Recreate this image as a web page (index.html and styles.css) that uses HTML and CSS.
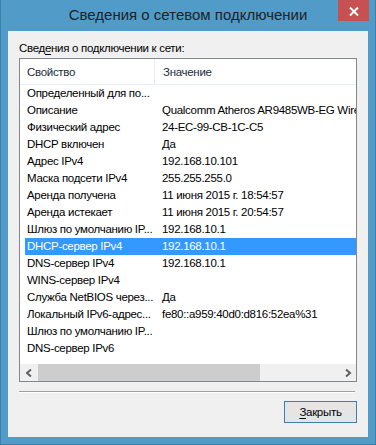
FILE: index.html
```html
<!DOCTYPE html>
<html>

<head>
    <title>Сведения о сетевом подключении</title>
    <link rel="stylesheet" href="styles.css">
</head>

<body>
    <div class="window">
        <div class="titlebar">
            <span></span>
            <h1 class="title">Сведения о сетевом подключении</h1>
            <button type="button" class="close" aria-label="Закрыть">
                <svg width="10" height="9" viewBox="0 0 10 9">
                    <path d="M1 0.5 L9 8.5 M9 0.5 L1 8.5" stroke="#fff" stroke-width="2" fill="none" />
                </svg>
            </button>
        </div>

        <div class="panel">
            <label class="caption">Свед<u>е</u>ния о подключении к сети:</label>

            <div class="listview">
                <div class="list-header">
                    <div class="col col-name">Свойство</div>
                    <div class="col col-value">Значение</div>
                </div>

                <div class="list-body">
                    <div class="row"><div class="col col-name">Определенный для по...</div><div class="col col-value"></div></div>
                    <div class="row"><div class="col col-name">Описание</div><div class="col col-value">Qualcomm Atheros AR9485WB-EG Wireless Network Adapter</div></div>
                    <div class="row"><div class="col col-name">Физический адрес</div><div class="col col-value">24-EC-99-CB-1C-C5</div></div>
                    <div class="row"><div class="col col-name">DHCP включен</div><div class="col col-value">Да</div></div>
                    <div class="row"><div class="col col-name">Адрес IPv4</div><div class="col col-value">192.168.10.101</div></div>
                    <div class="row"><div class="col col-name">Маска подсети IPv4</div><div class="col col-value">255.255.255.0</div></div>
                    <div class="row"><div class="col col-name">Аренда получена</div><div class="col col-value">11 июня 2015 г. 18:54:57</div></div>
                    <div class="row"><div class="col col-name">Аренда истекает</div><div class="col col-value">11 июня 2015 г. 20:54:57</div></div>
                    <div class="row"><div class="col col-name">Шлюз по умолчанию IP...</div><div class="col col-value">192.168.10.1</div></div>
                    <div class="row selected"><div class="col col-name">DHCP-сервер IPv4</div><div class="col col-value">192.168.10.1</div></div>
                    <div class="row"><div class="col col-name">DNS-сервер IPv4</div><div class="col col-value">192.168.10.1</div></div>
                    <div class="row"><div class="col col-name">WINS-сервер IPv4</div><div class="col col-value"></div></div>
                    <div class="row"><div class="col col-name">Служба NetBIOS через...</div><div class="col col-value">Да</div></div>
                    <div class="row"><div class="col col-name">Локальный IPv6-адрес...</div><div class="col col-value">fe80::a959:40d0:d816:52ea%31</div></div>
                    <div class="row"><div class="col col-name">Шлюз по умолчанию IP...</div><div class="col col-value"></div></div>
                    <div class="row"><div class="col col-name">DNS-сервер IPv6</div><div class="col col-value"></div></div>
                </div>

                <div class="hscroll">
                    <div class="arrow">
                        <svg width="8" height="8" viewBox="0 0 8 8">
                            <path d="M6 0.5 L2 4 L6 7.5" stroke="#606060" stroke-width="2" fill="none" />
                        </svg>
                    </div>
                    <div class="track">
                        <div class="thumb"></div>
                    </div>
                    <div class="arrow">
                        <svg width="8" height="8" viewBox="0 0 8 8">
                            <path d="M2 0.5 L6 4 L2 7.5" stroke="#606060" stroke-width="2" fill="none" />
                        </svg>
                    </div>
                </div>
            </div>

            <hr class="separator">

            <div class="buttons">
                <button type="button" class="btn"><u>З</u>акрыть</button>
            </div>
        </div>
    </div>
</body>

</html>
```

FILE: styles.css
```css
body {
    margin: 0;
    font-family: "Liberation Sans", Arial, sans-serif;
    font-size: 11.5px;
    letter-spacing: -0.3px;
    color: #000;
}

.window {
    width: 376px;
    height: 445px;
    box-sizing: border-box;
    background-color: #519bc9;
    border: 1px solid #3f7fab;
    border-top: none;
    display: flex;
    flex-direction: column;
}

.titlebar {
    height: 31px;
    display: grid;
    grid-template-columns: 1fr auto 1fr;
}

.title {
    margin: 0;
    font-size: 15px;
    font-weight: normal;
    letter-spacing: 0;
    color: #222;
    line-height: 30px;
    white-space: nowrap;
}

.close {
    justify-self: end;
    align-self: start;
    width: 31px;
    height: 21px;
    margin-right: 6px;
    padding: 0;
    border: none;
    background-color: #c75050;
    display: flex;
    align-items: center;
    justify-content: center;
    padding-top: 2px;
}

.panel {
    flex: 1;
    margin: 0 7px 7px 7px;
    background-color: #f0f0f0;
    padding: 9px 11px 0 11px;
    display: flex;
    flex-direction: column;
}

.caption {
    display: block;
    height: 18px;
    line-height: 16px;
}

.caption u,
.btn u {
    text-decoration-thickness: 1px;
    text-underline-offset: 2px;
}

.listview {
    height: 324px;
    box-sizing: border-box;
    border: 1px solid #828790;
    background-color: #fff;
    display: flex;
    flex-direction: column;
    overflow: hidden;
}

.list-header {
    height: 25px;
    flex-shrink: 0;
    display: flex;
    border-bottom: 1px solid #e5eef9;
    padding-left: 5px;
}

.list-header .col {
    line-height: 26px;
    color: #1e2a3a;
}

.list-header .col-name {
    border-right: 1px solid #e5eef9;
}

.list-body {
    flex: 1;
    overflow: hidden;
}

.row {
    height: 17px;
    display: flex;
    margin-left: 5px;
    width: 600px;
    line-height: 17px;
    white-space: nowrap;
}

.col {
    overflow: hidden;
    white-space: nowrap;
}

.col-name {
    width: 127px;
    padding-left: 2px;
    flex-shrink: 0;
    text-overflow: ellipsis;
}

.col-value {
    padding-left: 8px;
    flex: 1;
}

.row.selected {
    background-color: #3399ff;
    color: #fff;
}

.hscroll {
    height: 17px;
    flex-shrink: 0;
    display: flex;
    background-color: #f0f0f0;
}

.arrow {
    width: 17px;
    display: flex;
    align-items: center;
    justify-content: center;
}

.track {
    flex: 1;
    display: flex;
    align-items: stretch;
}

.thumb {
    width: 222px;
    margin-left: 1px;
    background-color: #cdcdcd;
}

.separator {
    margin: 9px 2px 0 0;
    border: none;
    border-top: 1px solid #a0a0a0;
    border-bottom: 1px solid #fff;
}

.buttons {
    display: flex;
    justify-content: flex-end;
    margin-top: 8px;
}

.btn {
    width: 73px;
    height: 22px;
    box-sizing: border-box;
    border: 1px solid #3c7fb1;
    background: #e5e5e5;
    font-family: "Liberation Sans", Arial, sans-serif;
    font-size: 11.5px;
    letter-spacing: -0.3px;
    color: #000;
    padding: 0;
}
```
